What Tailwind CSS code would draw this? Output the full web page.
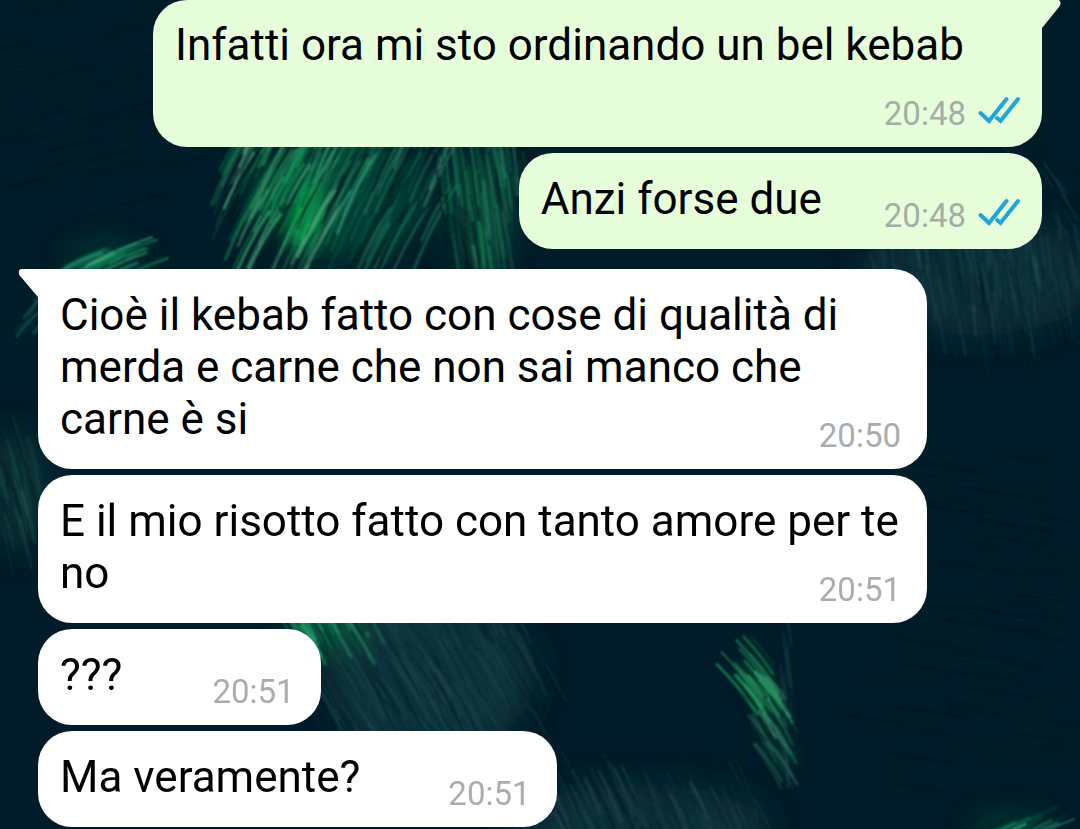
<!DOCTYPE html>
<html lang="it">
<head>
  <meta charset="UTF-8" />
  <title>Chat</title>
  <meta name="viewport" content="width=device-width, initial-scale=1" />
  <script src="https://cdn.jsdelivr.net/npm/@tailwindcss/browser@4"></script>
</head>
<body class="relative min-h-screen overflow-x-hidden bg-[#001c28] font-[Roboto,'Liberation_Sans',sans-serif]">

  <!-- Wallpaper -->
  <svg id="wallpaper" class="fixed inset-0 -z-10 h-full w-full" viewBox="0 0 1080 829" preserveAspectRatio="xMidYMid slice" aria-hidden="true">
    <defs>
      <filter id="soft" x="-100%" y="-100%" width="300%" height="300%"><feGaussianBlur stdDeviation="16" /></filter>
      <filter id="core" x="-100%" y="-100%" width="300%" height="300%"><feGaussianBlur stdDeviation="9" /></filter>
      <filter id="hair" x="0" y="0" width="1080" height="829" filterUnits="userSpaceOnUse"><feGaussianBlur stdDeviation="0.8" /></filter>
    </defs>
    <rect width="1080" height="829" fill="#001c28" />
    <g filter="url(#soft)">
      <ellipse cx="345" cy="195" rx="85" ry="65" fill="#00503a" opacity="0.65" />
      <ellipse cx="482" cy="215" rx="26" ry="60" fill="#0a6045" opacity="0.8" />
      <ellipse cx="105" cy="262" rx="35" ry="12" fill="#006b48" opacity="0.7" />
      <ellipse cx="980" cy="275" rx="120" ry="60" fill="#12363f" opacity="0.7" />
      <ellipse cx="18" cy="490" rx="26" ry="60" fill="#0d403e" opacity="0.7" />
      <ellipse cx="430" cy="675" rx="105" ry="80" fill="#12363f" opacity="0.9" />
      <ellipse cx="325" cy="625" rx="35" ry="20" fill="#087848" opacity="0.7" />
      <ellipse cx="640" cy="830" rx="130" ry="45" fill="#12363d" opacity="0.85" />
      <ellipse cx="1010" cy="832" rx="36" ry="10" fill="#087048" opacity="0.7" />
    </g>
    <g filter="url(#core)">
      <ellipse cx="308" cy="212" rx="14" ry="38" fill="#00b84a" opacity="0.9" transform="rotate(12 308 212)" />
      <ellipse cx="268" cy="190" rx="10" ry="32" fill="#068048" opacity="0.6" transform="rotate(28 268 190)" />
      <ellipse cx="762" cy="690" rx="8" ry="35" fill="#087044" opacity="0.6" transform="rotate(-38 762 690)" />
      <ellipse cx="778" cy="745" rx="8" ry="26" fill="#07553c" opacity="0.6" transform="rotate(-28 778 745)" />
    </g>
    <g id="strands" fill="none" filter="url(#hair)"></g>
  </svg>

  <!-- Messages -->
  <main class="flex flex-col gap-[6px] px-[38px]">

    <article class="relative flex w-full max-w-[889px] flex-col self-end rounded-b-[34px] rounded-tl-[34px] bg-[#e6ffda] px-[22px] pt-[19px] pb-[15px]">
      <svg class="absolute top-0 left-full h-[30px] w-[20px]" viewBox="0 0 20 30" aria-hidden="true">
        <path d="M-1 0H17Q20 3 17 7L0 28H-1Z" fill="#e6ffda" />
      </svg>
      <p class="text-[44px] leading-[52px] text-black">Infatti ora mi sto ordinando un bel kebab</p>
      <div class="mt-[25px] flex items-end gap-3 self-end">
        <time class="text-[33px] leading-[36px] text-[#a5aea8]">20:48</time>
        <svg class="mb-2 h-[28px] w-[42px]" viewBox="0 0 42 28" role="img" aria-label="Letto">
          <path d="M2.500 17L11 25L28.500 3M19 22L22.500 25L40 3" fill="none" stroke="#1da5dc" stroke-width="4" stroke-linecap="round" />
        </svg>
      </div>
    </article>

    <article class="flex max-w-[889px] items-end gap-[62px] self-end rounded-[34px] bg-[#e6ffda] px-[22px] pt-5 pb-[15px]">
      <p class="pb-[9px] text-[44px] leading-[52px] text-black">Anzi forse due</p>
      <div class="flex items-end gap-3">
        <time class="text-[33px] leading-[36px] text-[#a5aea8]">20:48</time>
        <svg class="mb-2 h-[28px] w-[42px]" viewBox="0 0 42 28" role="img" aria-label="Letto">
          <path d="M2.500 17L11 25L28.500 3M19 22L22.500 25L40 3" fill="none" stroke="#1da5dc" stroke-width="4" stroke-linecap="round" />
        </svg>
      </div>
    </article>

    <article class="relative mt-[14px] max-w-[889px] self-start rounded-b-[34px] rounded-tr-[34px] bg-white px-[22px] pt-5 pb-[15px]">
      <svg class="absolute top-0 right-full h-[30px] w-[20px]" viewBox="0 0 20 30" aria-hidden="true">
        <path d="M21 0H4Q0 0 1 5Q1 6 3 8L20 28H21Z" fill="#ffffff" />
      </svg>
      <p class="flow-root text-[44px] leading-[52px] text-black">Cioè il kebab fatto con cose di qualità di merda e carne che non sai manco che carne è si<time class="float-right mt-[25px] mr-1 text-[33px] leading-[36px] text-[#a9adb0]">20:50</time></p>
    </article>

    <article class="max-w-[889px] self-start rounded-[34px] bg-white px-[22px] pt-5 pb-[15px]">
      <p class="flow-root text-[44px] leading-[52px] text-black">E il mio risotto fatto con tanto amore per te no<time class="float-right mt-[25px] mr-1 text-[33px] leading-[36px] text-[#a9adb0]">20:51</time></p>
    </article>

    <article class="flex max-w-[889px] items-end gap-[90px] self-start rounded-[34px] bg-white px-[22px] pt-5 pb-[15px]">
      <p class="pb-[9px] text-[44px] leading-[52px] text-black">???</p>
      <time class="mr-1 text-[33px] leading-[36px] text-[#a9adb0]">20:51</time>
    </article>

    <article class="flex max-w-[889px] items-end gap-[88px] self-start rounded-[34px] bg-white px-[22px] pt-5 pb-[15px]">
      <p class="pb-[9px] text-[44px] leading-[52px] text-black">Ma veramente?</p>
      <time class="mr-1 text-[33px] leading-[36px] text-[#a9adb0]">20:51</time>
    </article>
  </main>

  <script>
    // each tuft: centre, spread, direction of the hairs (dx, dy), count, colours
    const tufts = [
      { x: 292, y: 185, w: 65, h: 80, dx: -38, dy: 70, n: 120, colors: ["#18a05a", "#37b070", "#00231c", "#00231c", "#0b7a48", "#5aa886"], o: 0.5 },
      { x: 375, y: 175, w: 75, h: 85, dx: -38, dy: 75, n: 110, colors: ["#1f8a63", "#3f9a80", "#001820", "#001820", "#0a5a45"], o: 0.5 },
      { x: 482, y: 205, w: 45, h: 80, dx: 10, dy: 75, n: 100, colors: ["#1d8a5c", "#001820", "#2e8068", "#001820", "#07583c"], o: 0.5 },
      { x: 108, y: 262, w: 38, h: 14, dx: -50, dy: 22, n: 40, colors: ["#119060", "#3cae83", "#002820"], o: 0.45 },
      { x: 34, y: 315, w: 14, h: 24, dx: -16, dy: 20, n: 14, colors: ["#14604a", "#27816a"], o: 0.3 },
      { x: 985, y: 280, w: 115, h: 70, dx: 7, dy: 42, n: 220, colors: ["#2a5860", "#001822", "#1b474e", "#001822"], o: 0.28 },
      { x: 1030, y: 190, w: 50, h: 50, dx: 20, dy: 32, n: 40, colors: ["#234c56", "#001825"], o: 0.25 },
      { x: 14, y: 490, w: 24, h: 65, dx: 12, dy: 46, n: 55, colors: ["#1d5a50", "#001822", "#256058"], o: 0.3 },
      { x: 325, y: 620, w: 45, h: 22, dx: 28, dy: 46, n: 60, colors: ["#1fae66", "#46b98a", "#00281f", "#0b5a40"], o: 0.5 },
      { x: 430, y: 680, w: 130, h: 85, dx: 34, dy: 60, n: 220, colors: ["#2a5258", "#001822", "#1c434a", "#001822"], o: 0.28 },
      { x: 650, y: 825, w: 120, h: 55, dx: 22, dy: 50, n: 160, colors: ["#2d5256", "#001822", "#1c4046", "#001822"], o: 0.3 },
      { x: 757, y: 687, w: 20, h: 36, dx: 34, dy: 44, n: 34, colors: ["#1fae60", "#4ec886", "#0a6a40", "#001c20"], o: 0.5 },
      { x: 773, y: 737, w: 18, h: 32, dx: 28, dy: 42, n: 26, colors: ["#2a8a60", "#5aa08a", "#0a4a3a", "#001c20"], o: 0.4 },
      { x: 786, y: 690, w: 5, h: 90, dx: 3, dy: 40, n: 20, colors: ["#2b4d58"], o: 0.25 },
      { x: 1008, y: 828, w: 45, h: 10, dx: -50, dy: 24, n: 30, colors: ["#15a066", "#0a6048", "#2c9a78", "#002420"], o: 0.5 },
      { x: 90, y: 110, w: 110, h: 110, dx: -60, dy: 14, n: 40, colors: ["#0a2a34", "#001320"], o: 0.25 },
      { x: 980, y: 620, w: 130, h: 180, dx: 60, dy: 9, n: 80, colors: ["#0a2a34", "#001320"], o: 0.25 }
    ];

    let seed = 7;
    function rand() {
      seed = (seed * 16807) % 2147483647;
      return seed / 2147483647;
    }

    const group = document.getElementById("strands");
    tufts.forEach(t => {
      for (let i = 0; i < t.n; i++) {
        const angle = rand() * Math.PI * 2;
        const radius = Math.pow(rand(), 0.7) * 1.05;
        const k = 0.5 + rand() * 0.8;
        const dx = t.dx * k + (rand() - 0.5) * 5;
        const dy = t.dy * k;
        const x = t.x + Math.cos(angle) * radius * t.w - dx / 2;
        const y = t.y + Math.sin(angle) * radius * t.h - dy / 2;
        const path = document.createElementNS("http://www.w3.org/2000/svg", "path");
        path.setAttribute("d", `M${x} ${y}q${dx * 0.56} ${dy * 0.44} ${dx} ${dy}`);
        path.setAttribute("stroke", t.colors[Math.floor(rand() * t.colors.length)]);
        path.setAttribute("stroke-width", 1 + rand() * 2);
        path.setAttribute("opacity", t.o * (0.5 + rand()));
        group.appendChild(path);
      }
    });
  </script>
</body>
</html>
